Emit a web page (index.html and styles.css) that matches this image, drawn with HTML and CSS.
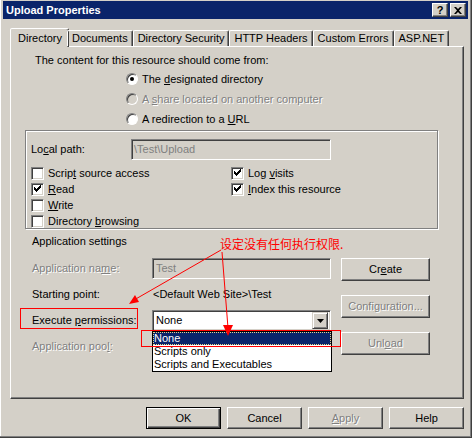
FILE: index.html
```html
<!DOCTYPE html>
<html lang="en">
<head>
  <meta charset="UTF-8" />
  <title>Upload Properties</title>
  <link rel="stylesheet" href="styles.css">
</head>
<body>

<div class="window">
  <div class="titlebar">
    <span class="title">Upload Properties</span>
    <div class="caption-btns">
      <span class="cap-btn">?</span>
      <span class="cap-btn cap-close">
        <svg width="8" height="7" viewBox="0 0 8 7"><path d="M0 0h2l2 2 2-2h2L5 3.5 8 7H6L4 5 2 7H0l3-3.5z" fill="#000"/></svg>
      </span>
    </div>
  </div>

  <div class="tabs">
    <div class="tab active">Directory</div>
    <div class="tab">Documents</div>
    <div class="tab">Directory Security</div>
    <div class="tab">HTTP Headers</div>
    <div class="tab">Custom Errors</div>
    <div class="tab">ASP.NET</div>
  </div>

  <div class="panel">
    <div class="source-text">The content for this resource should come from:</div>
    <div class="radios">
      <div class="radio-row"><span class="radio checked"></span><span>The <u>d</u>esignated directory</span></div>
      <div class="radio-row disabled"><span class="radio dim"></span><span>A <u>s</u>hare located on another computer</span></div>
      <div class="radio-row"><span class="radio"></span><span>A redirection to a <u>U</u>RL</span></div>
    </div>

    <div class="groupbox">
      <div class="path-row">
        <span class="path-label">Lo<u>c</u>al path:</span>
        <div class="field disabled-field path-field">\Test\Upload</div>
      </div>
      <div class="checks">
        <div class="check-row"><span class="check"></span><span>Scrip<u>t</u> source access</span></div>
        <div class="check-row"><span class="check on"></span><span>Log <u>v</u>isits</span></div>
        <div class="check-row"><span class="check on"></span><span><u>R</u>ead</span></div>
        <div class="check-row"><span class="check on"></span><span><u>I</u>ndex this resource</span></div>
        <div class="check-row"><span class="check"></span><span><u>W</u>rite</span></div>
        <div class="check-row"></div>
        <div class="check-row"><span class="check"></span><span>Directory <u>b</u>rowsing</span></div>
      </div>
    </div>

    <div class="section-title">Application settings</div>

    <div class="app">
      <div class="app-grid">
        <span class="dim-text">Application na<u>m</u>e:</span>
        <div class="field disabled-field">Test</div>
        <span>Starting point:</span>
        <span class="value">&lt;Default Web Site&gt;\Test</span>
        <span>Execute <u>p</u>ermissions:</span>
        <div class="select-wrap">
          <div class="field select">
            <span>None</span>
            <span class="drop-btn"><svg width="7" height="4" viewBox="0 0 7 4"><path d="M0 0h7L3.5 4z" fill="#000"/></svg></span>
          </div>
          <div class="droplist">
            <div class="opt selected">None</div>
            <div class="opt">Scripts only</div>
            <div class="opt">Scripts and Executables</div>
          </div>
        </div>
        <span class="dim-text">Application poo<u>l</u>:</span>
        <span></span>
      </div>
      <div class="app-buttons">
        <button class="btn">Cr<u>e</u>ate</button>
        <button class="btn" disabled>Confi<u>g</u>uration...</button>
        <button class="btn" disabled>Unl<u>o</u>ad</button>
      </div>
    </div>
  </div>

  <div class="footer">
    <button class="btn default">OK</button>
    <button class="btn">Cancel</button>
    <button class="btn" disabled><u>A</u>pply</button>
    <button class="btn">Help</button>
  </div>

  <!-- red notes drawn over the dialog -->
  <div class="note">设定没有任何执行权限.</div>
  <svg class="marks" width="472" height="438" viewBox="0 0 472 438">
    <g stroke="#ff0000" fill="none" stroke-width="1">
      <rect x="20.5" y="308.5" width="117" height="20"/>
      <rect x="141.5" y="330.5" width="199" height="16"/>
      <line x1="221" y1="250" x2="134" y2="300"/>
      <line x1="222" y1="252" x2="228" y2="328"/>
    </g>
    <g fill="#ff0000">
      <polygon points="129,304 135,295 139,302"/>
      <polygon points="228,336 223,325 233,325"/>
    </g>
  </svg>
</div>

</body>
</html>
```

FILE: styles.css
```css
body {
  margin: 0;
  font-family: 'Liberation Sans', Arial, sans-serif;
  font-size: 11px;
  line-height: 13px;
  color: #000;
  background: #d4d0c8;
}
u {
  text-decoration: underline;
  text-underline-offset: 1px;
}
.window {
  position: relative;
  width: 472px;
  height: 438px;
  box-sizing: border-box;
  padding: 1px 3px 0 3px;
  background: #d4d0c8;
  border-right: 1px solid #404040;
  border-bottom: 1px solid #404040;
  box-shadow: inset -1px -1px #808080, inset 1px 0 #fff;
}
.titlebar {
  height: 18px;
  background: #0a246a;
  display: flex;
  align-items: center;
  justify-content: space-between;
  padding: 0 2px 0 3px;
}
.title {
  color: #fff;
  font-weight: bold;
  font-size: 11px;
}
.caption-btns {
  display: flex;
  gap: 2px;
}
.cap-btn {
  width: 16px;
  height: 14px;
  box-sizing: border-box;
  background: #d4d0c8;
  border: 1px solid;
  border-color: #fff #404040 #404040 #fff;
  box-shadow: inset -1px -1px #808080;
  display: flex;
  align-items: center;
  justify-content: center;
  font-weight: bold;
  font-size: 11px;
  line-height: 12px;
}

/* tabs */
.tabs {
  display: flex;
  align-items: flex-end;
  margin: 9px 0 0 7px;
  height: 18px;
  position: relative;
  z-index: 2;
}
.tab {
  height: 16px;
  box-sizing: border-box;
  padding: 1px 4px 0 4px;
  border: 1px solid;
  border-bottom: none;
  border-color: #fff #404040 transparent #fff;
  box-shadow: inset -1px 0 #808080;
  border-radius: 2px 2px 0 0;
  line-height: 13px;
  white-space: nowrap;
}
.tab.active {
  height: 19px;
  padding: 3px 6px 0 7px;
  margin: 0 -2px -1px 0;
  background: #d4d0c8;
}

.panel {
  margin-left: 7px;
  width: 454px;
  height: 353px;
  box-sizing: border-box;
  border: 1px solid;
  border-color: #fff #404040 #404040 #fff;
  box-shadow: inset -1px -1px #808080;
  position: relative;
}
.source-text {
  margin: 7px 0 0 24px;
}
.radios {
  margin: 2px 0 0 115px;
}
.radio-row {
  height: 20px;
  display: flex;
  align-items: center;
  gap: 4px;
}
.radio {
  width: 12px;
  height: 12px;
  box-sizing: border-box;
  border-radius: 50%;
  background: #fff;
  border: 1px solid;
  border-color: #808080 #fff #fff #808080;
  box-shadow: inset 1px 1px #404040;
  position: relative;
}
.radio.checked::after {
  content: '';
  position: absolute;
  left: 3px;
  top: 3px;
  width: 4px;
  height: 4px;
  border-radius: 50%;
  background: #000;
}
.radio.dim {
  background: #d4d0c8;
}
.disabled, .dim-text {
  color: #808080;
  text-shadow: 1px 1px #fff;
}

.groupbox {
  margin: 1px 0 0 14px;
  width: 413px;
  height: 99px;
  box-sizing: border-box;
  border: 1px solid #808080;
  box-shadow: 1px 1px #fff, inset 1px 1px #fff;
  padding: 8px 0 0 5px;
}
.path-row {
  display: flex;
  align-items: center;
}
.path-label {
  width: 100px;
}
.field {
  height: 21px;
  box-sizing: border-box;
  border: 1px solid;
  border-color: #808080 #fff #fff #808080;
  box-shadow: inset 1px 1px #404040, inset -1px -1px #d4d0c8;
  background: #fff;
  padding: 3px 3px 0;
}
.disabled-field {
  background: #d4d0c8;
  color: #808080;
}
.path-field {
  width: 200px;
  padding-left: 2px;
}
.checks {
  margin-top: 5px;
  display: grid;
  grid-template-columns: 200px 1fr;
}
.check-row {
  height: 16px;
  display: flex;
  align-items: center;
  gap: 4px;
}
.check {
  width: 13px;
  height: 13px;
  box-sizing: border-box;
  background: #fff;
  border: 1px solid;
  border-color: #808080 #fff #fff #808080;
  box-shadow: inset 1px 1px #404040, inset -1px -1px #d4d0c8;
  position: relative;
}
.check.on::after {
  content: '';
  position: absolute;
  left: 2px;
  top: 1px;
  width: 7px;
  height: 7px;
  background: no-repeat center/7px 7px url("data:image/svg+xml,%3Csvg xmlns='http://www.w3.org/2000/svg' viewBox='0 0 7 7'%3E%3Cpath d='M0 2h1v1h1v1h1V3h1V2h1V1h1V0h1v3H6v1H5v1H4v1H3v1H2V6H1V5H0z' fill='%23000'/%3E%3C/svg%3E");
}
.section-title {
  margin: 6px 0 0 21px;
}

.app {
  display: flex;
  gap: 10px;
  margin: 10px 0 0 21px;
}
.app-grid {
  display: grid;
  grid-template-columns: 120px 179px;
  grid-template-rows: 21px 19px 21px 18px;
  row-gap: 6px;
  align-items: center;
}
.value {
  padding-left: 1px;
}
.select-wrap {
  position: relative;
  height: 21px;
}
.select {
  display: flex;
  align-items: center;
  justify-content: space-between;
  padding: 0 2px 0 3px;
}
.drop-btn {
  width: 16px;
  height: 17px;
  box-sizing: border-box;
  background: #d4d0c8;
  border: 1px solid;
  border-color: #d4d0c8 #404040 #404040 #d4d0c8;
  box-shadow: inset 1px 1px #fff, inset -1px -1px #808080;
  display: flex;
  align-items: center;
  justify-content: center;
}
.droplist {
  position: absolute;
  left: 0;
  top: 21px;
  width: 180px;
  box-sizing: border-box;
  border: 1px solid #000;
  background: #fff;
  z-index: 3;
}
.opt {
  height: 13px;
  padding-left: 1px;
  line-height: 13px;
}
.opt.selected {
  background: #0a246a;
  color: #fff;
  outline: 1px dotted #e8d48a;
  outline-offset: -1px;
}
.app-buttons {
  display: flex;
  flex-direction: column;
  gap: 14px;
}

.btn {
  font: inherit;
  width: 89px;
  height: 23px;
  box-sizing: border-box;
  background: #d4d0c8;
  color: #000;
  border: 1px solid;
  border-color: #fff #404040 #404040 #fff;
  box-shadow: inset -1px -1px #808080;
  padding: 0;
}
.btn:disabled {
  color: #808080;
  text-shadow: 1px 1px #fff;
}
.btn.default {
  border: 1px solid #000;
  box-shadow: inset 1px 1px #fff, inset -1px -1px #404040, inset -2px -2px #808080;
}
.footer {
  display: flex;
  justify-content: flex-end;
  gap: 6px;
  margin: 8px 4px 0 0;
}
.footer .btn {
  width: 75px;
  height: 22px;
}

.note {
  position: absolute;
  left: 220px;
  top: 237px;
  color: #ff0000;
  font-family: 'Noto Sans CJK SC', sans-serif;
  font-size: 12px;
  line-height: 14px;
}
.marks {
  position: absolute;
  left: 0;
  top: 0;
  pointer-events: none;
  z-index: 5;
}
```
